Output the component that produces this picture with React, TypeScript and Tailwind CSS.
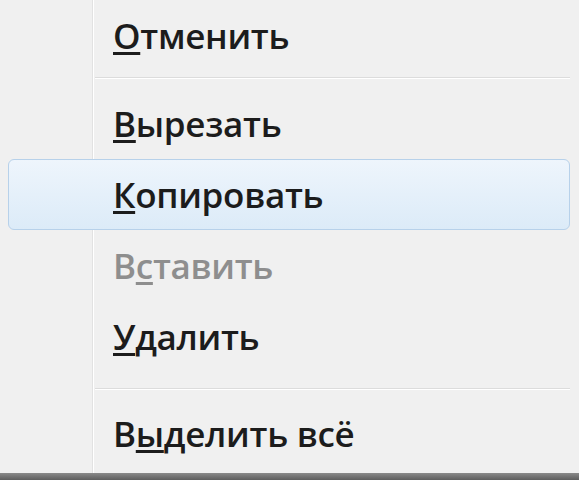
function Item({ pre, k, post, disabled, active }: { pre: string; k: string; post: string; disabled?: boolean; active?: boolean }) {
  return (
    <div className="relative flex h-[71px] items-center">
      {active ? (
        <div className="absolute left-[8px] right-[9px] top-0 bottom-0 rounded-[6px] border border-[#b7d1ea] bg-gradient-to-b from-[#eef5fc] to-[#dcebf8]" />
      ) : null}
      <span className={`relative ml-[113px] text-[35px] font-semibold leading-none tracking-[-0.3px] ${disabled ? "text-[#8e8e8e]" : "text-[#1c1c1c]"}`}>
        {pre}
        <span className="underline decoration-[2.5px] underline-offset-[3px]">{k}</span>
        {post}
      </span>
    </div>
  );
}

function Separator({ tall }: { tall?: boolean }) {
  return (
    <div className={`flex flex-col pl-[95px] pr-[9px] ${tall ? "h-[26px] pt-[16px]" : "h-[17px] pt-[6px]"}`}>
      <div className="h-px bg-[#dcdcdc]" />
      <div className="h-px bg-white" />
    </div>
  );
}

export default function App() {
  return (
    <div className="relative h-[480px] w-[579px] overflow-hidden bg-[#f0f0f0]" style={{ fontFamily: '"Open Sans", "Noto Sans", sans-serif' }}>
      <div className="absolute left-[92px] top-0 bottom-0 w-px bg-[#e2e2e2]" />
      <div className="absolute left-[93px] top-0 bottom-0 w-px bg-white" />
      <div className="relative flex flex-col">
        <Item pre="" k="О" post="тменить" />
        <Separator />
        <Item pre="" k="В" post="ырезать" />
        <Item pre="" k="К" post="опировать" active />
        <Item pre="В" k="с" post="тавить" disabled />
        <Item pre="" k="У" post="далить" />
        <Separator tall />
        <Item pre="В" k="ы" post="делить всё" />
      </div>
      <div className="absolute bottom-0 left-0 right-0 h-[7px] bg-gradient-to-b from-[#8a8a8a] to-[#5e5e5e]" />
    </div>
  );
}
